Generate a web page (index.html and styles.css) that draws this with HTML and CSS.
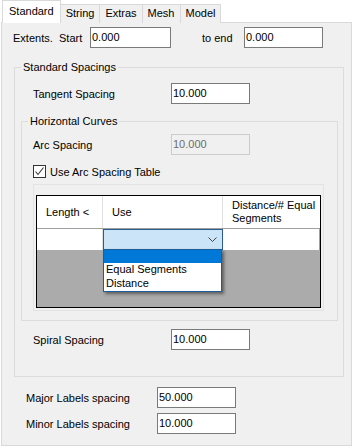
FILE: index.html
```html
<!DOCTYPE html>
<html>
<head>
<meta charset="utf-8">
<title>Standard</title>
<link rel="stylesheet" href="styles.css">
</head>
<body>
<div class="tabs">
  <ul class="tab_strip">
    <li class="active">Standard</li>
    <li>String</li>
    <li>Extras</li>
    <li>Mesh</li>
    <li>Model</li>
  </ul>
  <div class="page">
    <div class="extents">
      <span class="lbl_extents">Extents.</span>
      <span class="lbl_start">Start</span>
      <input class="txt w80" value="0.000" readonly>
      <span class="lbl_end">to end</span>
      <input class="txt w79" value="0.000" readonly>
    </div>

    <fieldset class="group std">
      <legend>Standard Spacings</legend>
      <div class="field tangent">
        <label>Tangent Spacing</label>
        <input class="txt w79" value="10.000" readonly>
      </div>

      <fieldset class="group curves">
        <legend>Horizontal Curves</legend>
        <div class="field arc">
          <label>Arc Spacing</label>
          <input class="txt w79" value="10.000" disabled>
        </div>
        <div class="check">
          <span class="box">
            <svg width="11" height="11" viewBox="0 0 11 11"><path d="M1.5 5.5 L4 8.5 L9.5 1.5" fill="none" stroke="#333" stroke-width="1.1"/></svg>
          </span>
          <span>Use Arc Spacing Table</span>
        </div>
        <div class="grid_panel">
          <div class="grid">
            <div class="grid_head">
              <div class="c1">Length &lt;</div>
              <div class="c2">Use</div>
              <div class="c3">Distance/# Equal Segments</div>
            </div>
            <div class="grid_row">
              <div class="c1"></div>
              <div class="c2 combo">
                <svg width="9" height="5" viewBox="0 0 9 5"><path d="M0.5 0.5 L4.5 4.5 L8.5 0.5" fill="none" stroke="#444" stroke-width="1"/></svg>
              </div>
              <div class="c3"></div>
            </div>
            <ul class="drop">
              <li class="sel">&nbsp;</li>
              <li>Equal Segments</li>
              <li>Distance</li>
            </ul>
          </div>
        </div>
      </fieldset>

      <div class="field spiral">
        <label>Spiral Spacing</label>
        <input class="txt w79" value="10.000" readonly>
      </div>
    </fieldset>

    <div class="field labels first">
      <label>Major Labels spacing</label>
      <input class="txt w79" value="50.000" readonly>
    </div>
    <div class="field labels">
      <label>Minor Labels spacing</label>
      <input class="txt w79" value="10.000" readonly>
    </div>
  </div>
</div>
</body>
</html>
```

FILE: styles.css
```css
*{
	margin:0;
	padding:0;
	box-sizing:border-box;
	}
body{
	background:#fff;
	font-family:"Liberation Sans", Arial, sans-serif;
	font-size:11px;
	color:#000;
	}
li{
	list-style:none;
	}

/* tabs */
.tabs{
	width:351px;
	margin-left:1px;
	}
.tab_strip{
	display:flex;
	align-items:flex-end;
	height:22px;
	padding-left:1px;
	position:relative;
	z-index:1;
	}
.tab_strip li{
	height:19px;
	line-height:17px;
	padding:0 5px;
	background:#f0f0f0;
	border:1px solid #d9d9d9;
	border-bottom:none;
	margin-left:-1px;
	margin-bottom:-1px;
	}
.tab_strip li:first-child{
	margin-left:0;
	}
.tab_strip li.active{
	height:23px;
	line-height:20px;
	padding:0 6px;
	background:#fff;
	margin-bottom:-1px;
	}
.page{
	height:424px;
	background:#f0f0f0;
	border:1px solid #d9d9d9;
	}

/* text boxes */
.txt{
	display:block;
	height:21px;
	border:1px solid #7a7a7a;
	background:#fff;
	font-family:inherit;
	font-size:11px;
	color:#000;
	padding:0 1px 1px;
	outline:none;
	}
.txt:disabled{
	background:#f0f0f0;
	border-color:#ccc;
	color:#6d6d6d;
	}
.w80{ width:81px; }
.w79{ width:79px; }

/* extents row */
.extents{
	display:flex;
	align-items:center;
	margin-top:4px;
	padding-left:11px;
	}
.lbl_extents{ width:46px; }
.lbl_start{ width:31px; }
.lbl_end{
	margin-left:31px;
	width:42px;
	}

/* group boxes */
.group{
	border:1px solid #dcdcdc;
	padding:0 0 0 6px;
	}
.group legend{
	padding:0 2px;
	line-height:14px;
	}
.std{
	width:330px;
	height:317px;
	margin:12px 0 0 12px;
	}
.curves{
	width:317px;
	height:207px;
	margin-top:10px;
	}

.field{
	display:flex;
	align-items:center;
	}
.field label{
	width:150px;
	padding-left:12px;
	}
.tangent{ margin-top:9px; }
.arc{ margin-top:6px; }
.arc label{
	width:143px;
	padding-left:5px;
	}
.spiral{ margin-top:8px; }

/* checkbox */
.check{
	display:flex;
	align-items:center;
	margin:10px 0 0 5px;
	height:13px;
	}
.box{
	width:13px;
	height:13px;
	border:1px solid #333;
	background:#fff;
	margin-right:4px;
	}
.box svg{ display:block; }

/* data grid */
.grid_panel{
	width:291px;
	height:127px;
	margin:6px 0 0 5px;
	border:1px solid #e3e3e3;
	padding:10px 1px 0 2px;
	}
.grid{
	position:relative;
	width:285px;
	height:113px;
	border:1px solid #000;
	background:#ababab;
	}
.grid_head,
.grid_row{
	display:flex;
	background:#fff;
	}
.grid_head{
	height:33px;
	border-bottom:1px solid #a0a0a0;
	}
.grid_head div{
	display:flex;
	align-items:center;
	padding-left:9px;
	line-height:13px;
	}
.grid_row{
	height:21px;
	}
.c1{
	width:66px;
	border-right:1px solid #e0e0e0;
	}
.c2{
	width:120px;
	border-right:1px solid #e0e0e0;
	}
.c3{
	width:97px;
	}
.grid_row .c3{
	border-right:1px solid #a0a0a0;
	}
.combo{
	display:flex;
	align-items:center;
	justify-content:flex-end;
	padding-right:5px;
	background:#cce4f7;
	border:1px solid #2a5c8f;
	border-right-color:#2a5c8f;
	}
.combo svg{ display:block; }

.drop{
	position:absolute;
	left:66px;
	top:53px;
	width:119px;
	height:43px;
	background:#fff;
	border:1px solid #1e5d9a;
	box-shadow:2px 2px 3px rgba(0,0,0,.45);
	}
.drop li{
	height:14px;
	line-height:13px;
	padding-left:2px;
	}
.drop li.sel{
	height:13px;
	background:#0078d7;
	}

/* label spacing rows */
.labels label{
	width:155px;
	padding-left:24px;
	}
.labels.first{ margin-top:10px; }
.labels + .labels{ margin-top:5px; }
```
